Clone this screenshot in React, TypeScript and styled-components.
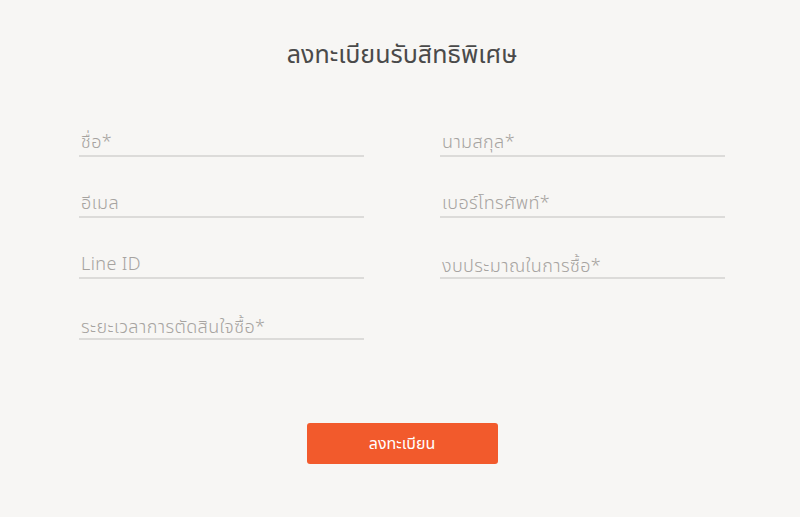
import React from "react";
import styled, { createGlobalStyle } from "styled-components";

const Global = createGlobalStyle`
  html, body { margin: 0; padding: 0; background: #f7f6f4; }
  body { font-family: "Noto Sans Thai", "Noto Sans", "DejaVu Sans", sans-serif; }
`;

const Page = styled.div`
  width: 800px;
  height: 517px;
  background: #f7f6f4;
  display: flex;
  flex-direction: column;
  align-items: center;
  padding: 40px 0 0 4px;
  box-sizing: border-box;
`;

const Title = styled.h1`
  margin: 0;
  font-size: 25px;
  line-height: 30px;
  font-weight: 400;
  color: #4a4a4a;
`;

const Form = styled.form`
  margin-top: 56px;
  width: 646px;
  display: grid;
  grid-template-columns: 285px 285px;
  column-gap: 76px;
  row-gap: 30px;
`;

const Field = styled.div<{ $select?: boolean }>`
  height: 31px;
  box-sizing: border-box;
  border-bottom: 2px solid #dcdbd9;
  display: flex;
  align-items: flex-end;
  padding: 0 0 ${(p) => (p.$select ? "0px" : "2px")} 2px;
`;

const Placeholder = styled.span`
  font-size: 18px;
  line-height: 20px;
  font-weight: 300;
  letter-spacing: 0.4px;
  color: #a6a3a0;
`;

const Actions = styled.div`
  margin-top: 83px;
  display: flex;
  justify-content: center;
`;

const Button = styled.button`
  width: 191px;
  height: 41px;
  border: none;
  border-radius: 3px;
  background: #f25a2c;
  color: #ffffff;
  font-family: inherit;
  font-size: 16px;
  cursor: pointer;
`;

const fields: { label: string; select?: boolean }[] = [
  { label: "ชื่อ*" },
  { label: "นามสกุล*" },
  { label: "อีเมล" },
  { label: "เบอร์โทรศัพท์*" },
  { label: "Line ID" },
  { label: "งบประมาณในการซื้อ*", select: true },
  { label: "ระยะเวลาการตัดสินใจซื้อ*", select: true },
];

export default function App() {
  return (
    <>
      <Global />
      <Page>
        <Title>ลงทะเบียนรับสิทธิพิเศษ</Title>
        <Form onSubmit={(e) => e.preventDefault()}>
          {fields.map((f) => (
            <Field key={f.label} $select={f.select}>
              <Placeholder>{f.label}</Placeholder>
            </Field>
          ))}
        </Form>
        <Actions>
          <Button type="submit">ลงทะเบียน</Button>
        </Actions>
      </Page>
    </>
  );
}
